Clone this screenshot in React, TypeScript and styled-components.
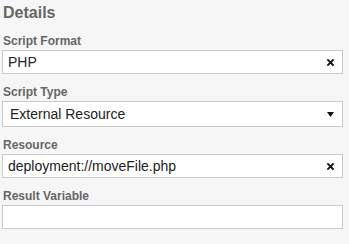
import React from "react";
import styled, { createGlobalStyle } from "styled-components";

const Global = createGlobalStyle`
  html, body {
    margin: 0;
    padding: 0;
    background: #f6f6f6;
    font-family: "Liberation Sans", Arial, sans-serif;
  }
`;

const Panel = styled.div`
  width: 341px;
  padding: 4px 0 0 2px;
  display: flex;
  flex-direction: column;
`;

const Heading = styled.h2`
  margin: 0;
  padding-left: 1px;
  font-size: 16px;
  line-height: 18px;
  font-weight: bold;
  color: #666;
`;

const Field = styled.div<{ $first?: boolean }>`
  display: flex;
  flex-direction: column;
  margin-top: ${(p) => (p.$first ? "12px" : "11px")};
`;

const Label = styled.label`
  font-size: 12px;
  line-height: 14px;
  font-weight: bold;
  color: #666;
  padding-left: 1px;
  margin-bottom: 2px;
`;

const Box = styled.div<{ $tall?: boolean }>`
  box-sizing: border-box;
  height: ${(p) => (p.$tall ? "26px" : "24px")};
  border: 1px solid #cacaca;
  background: #fff;
  display: flex;
  align-items: center;
  padding: 0 8px 0 ${(p) => (p.$tall ? "7px" : "5px")};
  font-size: 14px;
  color: #222;
`;

const Value = styled.span`
  flex: 1;
  white-space: nowrap;
  overflow: hidden;
`;

const Clear = () => (
  <svg width="7" height="7" viewBox="0 0 7 7">
    <path d="M1 1 L6 6 M6 1 L1 6" stroke="#111" strokeWidth="1.8" strokeLinecap="square" />
  </svg>
);

const Caret = () => (
  <svg width="7" height="5" viewBox="0 0 7 5">
    <path d="M0 0 H7 L3.5 5 Z" fill="#111" />
  </svg>
);

export default function App() {
  return (
    <>
      <Global />
      <Panel>
        <Heading>Details</Heading>
        <Field $first>
          <Label>Script Format</Label>
          <Box>
            <Value>PHP</Value>
            <Clear />
          </Box>
        </Field>
        <Field>
          <Label>Script Type</Label>
          <Box $tall>
            <Value>External Resource</Value>
            <Caret />
          </Box>
        </Field>
        <Field>
          <Label>Resource</Label>
          <Box>
            <Value>deployment://moveFile.php</Value>
            <Clear />
          </Box>
        </Field>
        <Field>
          <Label>Result Variable</Label>
          <Box>
            <Value></Value>
          </Box>
        </Field>
      </Panel>
    </>
  );
}
